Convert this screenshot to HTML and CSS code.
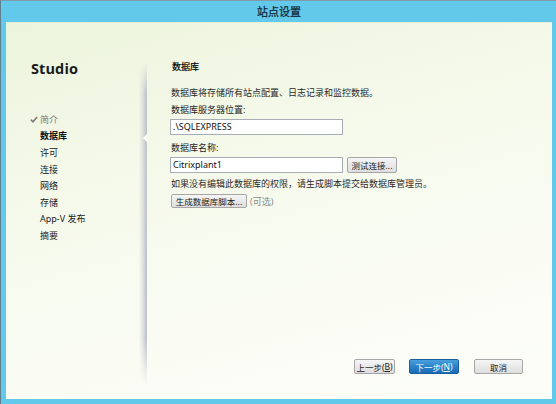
FILE: index.html
```html
<!DOCTYPE html>
<html lang="zh-CN">
<head>
<meta charset="utf-8">
<title>站点设置</title>
<link rel="stylesheet" href="styles.css">
</head>
<body>
<div class="window">
  <div class="titlebar">站点设置</div>
  <div class="client">
    <div class="nav">
      <div class="nav-content">
        <div class="brand">Studio</div>
        <ul class="steps">
          <li class="step done"><span class="mark"><svg width="8" height="7" viewBox="0 0 8 7"><path d="M0.8 3.6 L3 5.8 L7.2 0.9" fill="none" stroke="#7a7a7a" stroke-width="1.5"/></svg></span>简介</li>
          <li class="step current"><span class="mark"></span>数据库</li>
          <li class="step"><span class="mark"></span>许可</li>
          <li class="step"><span class="mark"></span>连接</li>
          <li class="step"><span class="mark"></span>网络</li>
          <li class="step"><span class="mark"></span>存储</li>
          <li class="step"><span class="mark"></span>App-V 发布</li>
          <li class="step"><span class="mark"></span>摘要</li>
        </ul>
      </div>
      <div class="nav-edge"><div class="notch"></div></div>
    </div>
    <div class="main">
      <div class="heading">数据库</div>
      <div class="desc">数据库将存储所有站点配置、日志记录和监控数据。</div>
      <div class="label l1">数据库服务器位置:</div>
      <div class="row r1"><div class="input">.\SQLEXPRESS</div></div>
      <div class="label l2">数据库名称:</div>
      <div class="row r2"><div class="input">Citrixplant1</div><div class="btn test">测试连接...</div></div>
      <div class="desc warn">如果没有编辑此数据库的权限，请生成脚本提交给数据库管理员。</div>
      <div class="row r3"><div class="btn gen">生成数据库脚本...</div><span class="optional">(可选)</span></div>
      <div class="footer">
        <div class="btn back">上一步(<u>B</u>)</div>
        <div class="btn primary next">下一步(<u>N</u>)</div>
        <div class="btn cancel">取消</div>
      </div>
    </div>
  </div>
</div>
</body>
</html>
```
FILE: styles.css
```css
* { box-sizing: border-box; }
html, body { margin: 0; padding: 0; }
body {
  width: 556px;
  height: 404px;
  overflow: hidden;
  font-family: "Noto Sans", "Noto Sans CJK SC", sans-serif;
  background: #62c8ea;
}
.window {
  width: 556px;
  height: 404px;
  display: flex;
  flex-direction: column;
  background: #63c9eb;
  border-top: 1px solid #7e9aa8;
  border-left: 1px solid #5f7f8e;
}
.titlebar {
  height: 21px;
  line-height: 21px;
  text-align: center;
  font-family: "Noto Sans CJK SC", sans-serif;
  font-size: 11px;
  color: #10293a;
  -webkit-text-stroke: 0.25px #10293a;
  padding-left: 1px;
}
.client {
  flex: 1;
  margin: 0 4px 5px 5px;
  display: flex;
  background: linear-gradient(165deg, #ecf4dc 0%, #f5f9ea 35%, #fafcf4 70%, #fcfdf8 100%);
  border-top: 1px solid #e4eed6;
}
.nav {
  width: 141px;
  display: flex;
}
.nav-content {
  flex: 1;
  padding-top: 37px;
  padding-left: 25px;
}
.brand {
  font-family: "Open Sans", "Noto Sans", sans-serif;
  font-weight: bold;
  font-size: 14.5px;
  line-height: 18px;
  color: #1b1b1b;
  letter-spacing: 0.1px;
}
.steps {
  list-style: none;
  margin: 33px 0 0 -1px;
  padding: 0;
}
.step {
  display: flex;
  align-items: center;
  height: 16.6px;
  font-size: 9px;
  color: #222;
  font-family: "Noto Sans", "Noto Sans CJK SC", sans-serif;
}
.step .mark {
  width: 10px;
  display: flex;
  align-items: center;
}
.step.done { color: #7c7c7c; }
.step.current { font-weight: bold; color: #111; }
.nav-edge {
  width: 8px;
  margin: 40px 0 14px 0;
  background: linear-gradient(to right, rgba(190,195,205,0) 0%, rgba(190,195,205,0.5) 55%, #bdc2cb 90%, #c8ccd4 100%);
  -webkit-mask-image: linear-gradient(to bottom, transparent 0, #000 30px, #000 calc(100% - 45px), transparent 100%);
  mask-image: linear-gradient(to bottom, transparent 0, #000 30px, #000 calc(100% - 45px), transparent 100%);
  display: flex;
  flex-direction: column;
  align-items: flex-end;
}
.notch {
  margin-top: 71px;
  width: 0;
  height: 0;
  border-top: 4px solid transparent;
  border-bottom: 4px solid transparent;
  border-right: 4px solid #fbfdf6;
}
.main {
  flex: 1;
  display: flex;
  flex-direction: column;
  padding: 38px 29px 25px 23px;
  font-family: "Noto Sans", "Noto Sans CJK SC", sans-serif;
  font-size: 9px;
  color: #222;
}
.heading, .desc, .label {
  height: 12px;
  line-height: 12px;
  white-space: nowrap;
}
.heading { color: #000; padding-left: 2px; -webkit-text-stroke: 0.2px #000; }
.desc { margin-top: 14px; color: #2a2a2a; padding-left: 1px; }
.label { padding-left: 1px; color: #1e1e1e; }
.l1 { margin-top: 5px; }
.l2 { margin-top: 7px; }
.warn { margin-top: 5px; }
.row { display: flex; align-items: center; }
.r1 { margin-top: 3px; }
.r2 { margin-top: 3px; gap: 4px; }
.r3 { margin-top: 4px; }
.input {
  width: 173px;
  height: 16px;
  line-height: 14px;
  background: #fff;
  border: 1px solid #a9adb5;
  padding-left: 2px;
  color: #111;
  font-size: 9px;
}
.btn {
  display: flex;
  align-items: center;
  justify-content: center;
  height: 15px;
  font-size: 8.5px;
  color: #222;
  background: linear-gradient(to bottom, #f6f6f6 0%, #e9e9e9 50%, #dedede 100%);
  border: 1px solid #a6a6a6;
  border-radius: 2px;
  white-space: nowrap;
}
.btn u { text-decoration: underline; }
.test { width: 50px; height: 16px; }
.gen { width: 76px; height: 14px; margin-left: 1px; }
.optional { margin-left: 3px; color: #8a8a8a; font-size: 9px; }
.footer {
  margin-top: auto;
  display: flex;
  justify-content: flex-end;
  align-items: center;
}
.back { width: 41px; }
.next { width: 50px; margin-left: 14px; }
.cancel { width: 49px; margin-left: 15px; }
.primary {
  color: #fff;
  background: linear-gradient(to bottom, #4aa0dd 0%, #2b82c8 50%, #1b6cb4 100%);
  border-color: #1a5f9c;
}
```
